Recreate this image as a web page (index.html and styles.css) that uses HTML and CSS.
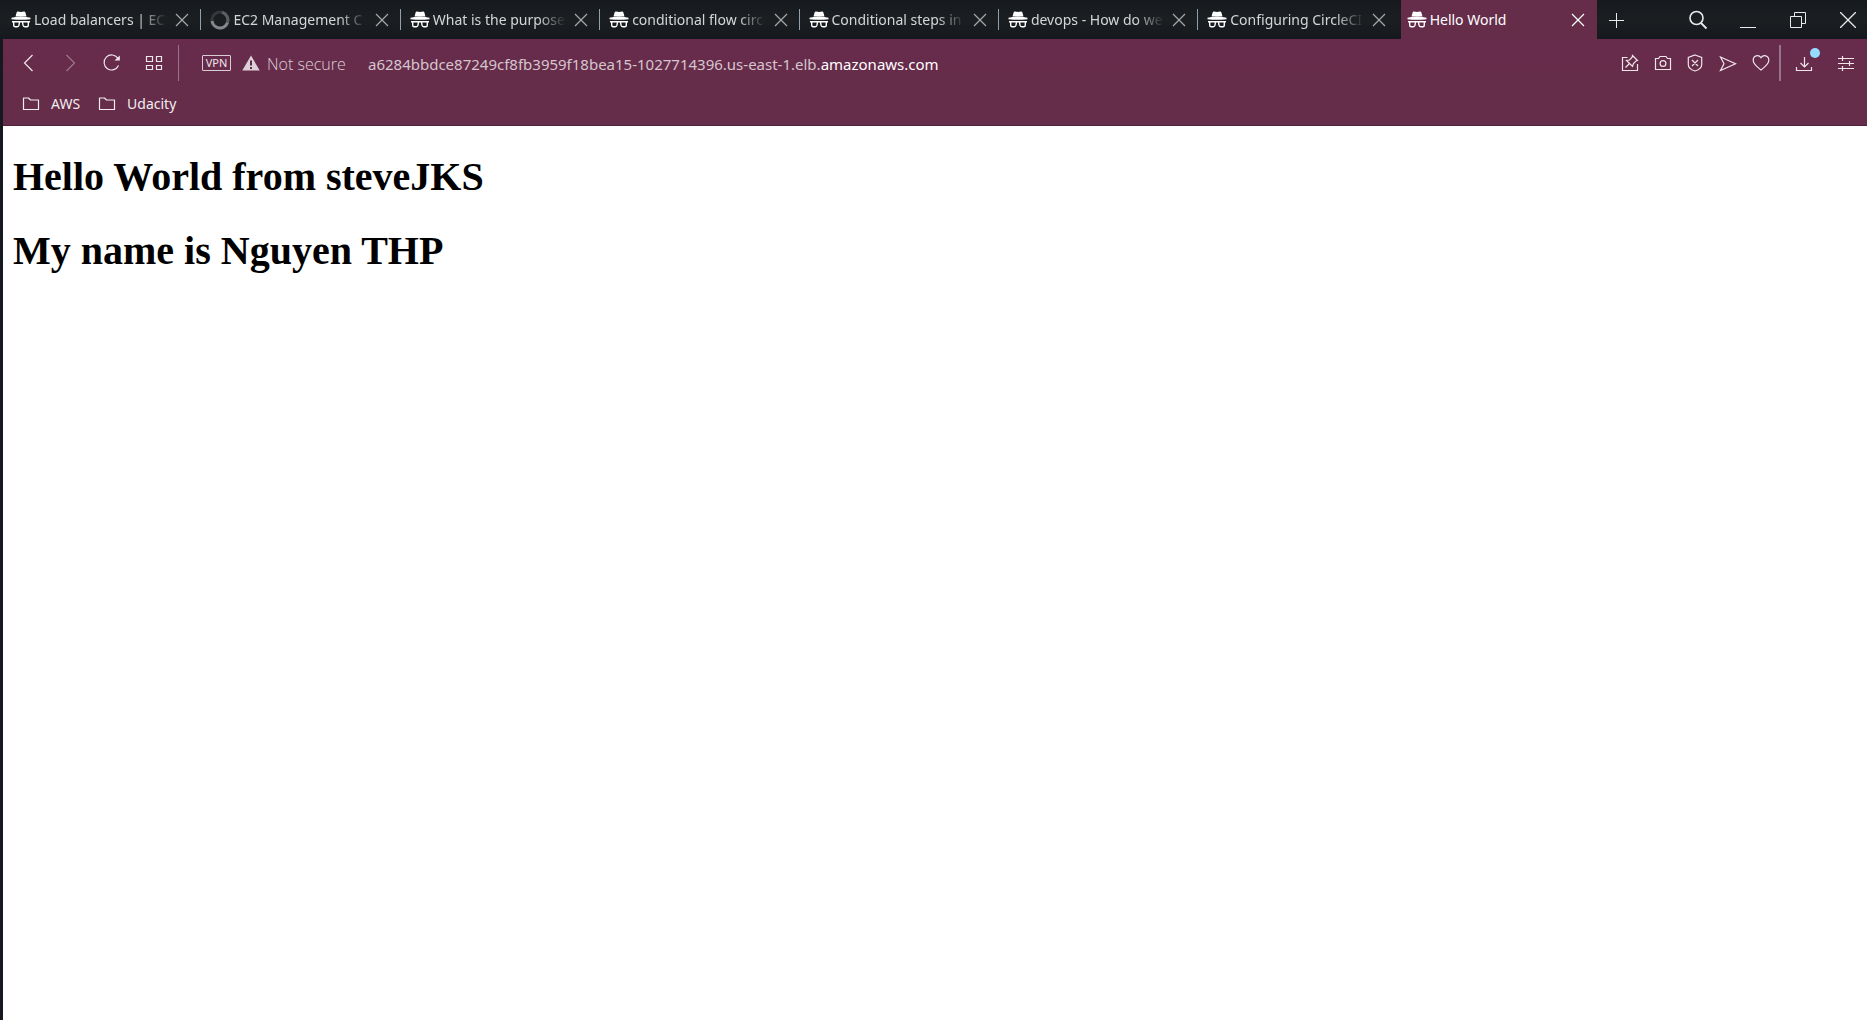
FILE: index.html
```
<!DOCTYPE html>
<html lang="en">
<head>
<meta charset="utf-8">
<title>Hello World</title>
<link rel="stylesheet" href="styles.css">
</head>
<body>
<svg class="sprite" aria-hidden="true">
  <symbol id="incognito" viewBox="0 0 20 17">
    <path fill="currentColor" d="M4.500 5.500L5.700 1.200Q6 0.300 7 0.400L10 1L13 0.400Q14 0.300 14.300 1.200L15.500 5.500ZM0.500 6.700Q4 5.800 10 5.800T19.500 6.700V8.200Q14 8.800 10 8.800T0.500 8.200Z"/>
    <path fill="none" stroke="currentColor" stroke-width="1.400" d="M1 10.800H19M2.700 11V14.200Q2.700 15.700 4.200 15.700H6.200Q7.700 15.700 8 14.200L8.500 11M17.300 11V14.200Q17.300 15.700 15.800 15.700H13.800Q12.300 15.700 12 14.200L11.500 11"/>
  </symbol>
  <symbol id="cross" viewBox="0 0 14 14"><path fill="none" stroke="currentColor" stroke-width="1.200" d="M1 1L13 13M13 1L1 13"/></symbol>
  <symbol id="folder" viewBox="0 0 18 14"><path fill="none" stroke="currentColor" stroke-width="1.200" stroke-linejoin="round" d="M1.500 1H6.500L8.500 3H16.500V12.500H1.500Z"/></symbol>
</svg>
<div class="window">
  <header class="titlebar">
    <nav class="tabs" aria-label="Tabs">
      <div class="tab"><svg class="favicon"><use href="#incognito"/></svg><a class="tab-title" href="#">Load balancers | EC2</a><button class="tab-close" aria-label="Close tab"><svg width="14" height="14"><use href="#cross"/></svg></button></div>
      <div class="tab"><svg class="favicon spinner" viewBox="0 0 20 20"><circle cx="10" cy="10" r="8" fill="none" stroke="#34383b" stroke-width="3"/><path d="M2 11A8 8 0 0 0 17.500 12.500" fill="none" stroke="#85888a" stroke-width="3"/><path d="M17.500 12.500A8 8 0 0 0 12 2.300" fill="none" stroke="#5b5f61" stroke-width="3"/></svg><a class="tab-title" href="#">EC2 Management C</a><button class="tab-close" aria-label="Close tab"><svg width="14" height="14"><use href="#cross"/></svg></button></div>
      <div class="tab"><svg class="favicon"><use href="#incognito"/></svg><a class="tab-title" href="#">What is the purpose</a><button class="tab-close" aria-label="Close tab"><svg width="14" height="14"><use href="#cross"/></svg></button></div>
      <div class="tab"><svg class="favicon"><use href="#incognito"/></svg><a class="tab-title" href="#">conditional flow circ</a><button class="tab-close" aria-label="Close tab"><svg width="14" height="14"><use href="#cross"/></svg></button></div>
      <div class="tab"><svg class="favicon"><use href="#incognito"/></svg><a class="tab-title" href="#">Conditional steps in</a><button class="tab-close" aria-label="Close tab"><svg width="14" height="14"><use href="#cross"/></svg></button></div>
      <div class="tab"><svg class="favicon"><use href="#incognito"/></svg><a class="tab-title" href="#">devops - How do we</a><button class="tab-close" aria-label="Close tab"><svg width="14" height="14"><use href="#cross"/></svg></button></div>
      <div class="tab"><svg class="favicon"><use href="#incognito"/></svg><a class="tab-title" href="#">Configuring CircleCI</a><button class="tab-close" aria-label="Close tab"><svg width="14" height="14"><use href="#cross"/></svg></button></div>
      <div class="tab active"><svg class="favicon"><use href="#incognito"/></svg><a class="tab-title" href="#" aria-current="page">Hello World</a><button class="tab-close" aria-label="Close tab"><svg width="14" height="14"><use href="#cross"/></svg></button></div>
    </nav>
    <button class="new-tab" aria-label="New tab"><svg width="16" height="16" viewBox="0 0 16 16"><path d="M8.500 1V16M1 8.500H16"/></svg></button>
    <div class="window-controls">
      <button aria-label="Search tabs"><svg width="20" height="20" viewBox="0 0 20 20"><circle cx="8.500" cy="8" r="6.500" stroke-width="1.600"/><path stroke-width="1.800" d="M13 13L18.500 18.500"/></svg></button>
      <button aria-label="Minimize"><svg width="16" height="16" viewBox="0 0 16 16"><path d="M0 15.500H16"/></svg></button>
      <button aria-label="Restore"><svg width="16" height="16" viewBox="0 0 16 16"><path d="M0.500 4.500H11.500V15.500H0.500ZM4.500 4.500V0.500H15.500V11.500H11.500"/></svg></button>
      <button aria-label="Close"><svg width="16" height="16" viewBox="0 0 16 16"><path stroke-width="1.300" d="M0 0L16 16M16 0L0 16"/></svg></button>
    </div>
  </header>
  <div class="chrome">
    <div class="toolbar">
      <div class="nav-buttons">
        <button aria-label="Back"><svg width="18" height="18" viewBox="0 0 18 18"><path d="M13.500 1L5.500 9L13.500 17"/></svg></button>
        <button aria-label="Forward" disabled><svg width="18" height="18" viewBox="0 0 18 18"><path d="M5.500 1L13.500 9L5.500 17"/></svg></button>
        <button aria-label="Reload"><svg width="18" height="18" viewBox="0 0 18 18"><path d="M15.500 11.500A7.500 7.500 0 1 1 14.800 4.200"/><path fill="currentColor" stroke="none" d="M16.800 1.500V6.500H11.500Z"/></svg></button>
        <button aria-label="Speed dial"><svg width="18" height="18" viewBox="0 0 18 18"><path d="M1.500 2.500H7.500V7.500H1.500ZM11.500 2.500H16.500V7.500H11.500ZM1.500 11.500H7.500V15.500H1.500ZM11.500 11.500H16.500V15.500H11.500Z"/></svg></button>
      </div>
      <span class="divider"></span>
      <div class="address">
        <button class="vpn">VPN</button>
        <svg class="warning" width="18" height="16" viewBox="0 0 18 16"><path fill="currentColor" d="M9 0.500L17.700 15.500H0.300Z"/><path stroke="#672b4a" stroke-width="2" d="M9 5.500V10.500M9 12V14"/></svg>
        <span class="security">Not secure</span>
        <div class="url" role="textbox" contenteditable="true" spellcheck="false" aria-label="Address">a6284bbdce87249cf8fb3959f18bea15-1027714396.us-east-1.elb.<span class="domain">amazonaws.com</span></div>
      </div>
      <div class="page-actions">
        <button aria-label="Pin page"><svg width="18" height="18" viewBox="0 0 18 18"><path d="M6.500 3.500H1.500V16.500H16.500V10M4.500 13.500L8.500 9.500M5.500 6.500L11.500 12.500L12.500 9.500L15 7L16.500 6.500L11.500 1.500L11 3.500L8.500 6L5.500 6.500Z"/></svg></button>
        <button aria-label="Snapshot"><svg width="18" height="18" viewBox="0 0 18 18"><path d="M1.500 4.500H4.500L6 2.500H12L13.500 4.500H16.500V15.500H1.500Z"/><circle cx="9" cy="9.500" r="2.900"/></svg></button>
        <button aria-label="Ad blocker"><svg width="18" height="18" viewBox="0 0 18 18"><path d="M9 1L15.700 3.500V10.500C15.700 14 12.500 16 9 17C5.500 16 2.300 14 2.300 10.500V3.500ZM6 6L12 12M12 6L6 12"/></svg></button>
        <button aria-label="Send to My Flow"><svg width="18" height="18" viewBox="0 0 18 18"><path d="M1.500 3L16.500 9.700L1.500 16.500L5 9.700Z"/></svg></button>
        <button aria-label="Add to bookmarks"><svg width="18" height="18" viewBox="0 0 18 18"><path d="M9 3.700C6.500 0.200 1.200 1.300 1.200 6.300C1.200 10.500 5.500 13 9 16C12.500 13 16.800 10.500 16.800 6.300C16.800 1.300 11.500 0.200 9 3.700Z"/></svg></button>
      </div>
      <span class="divider bold"></span>
      <div class="tools">
        <button class="download" aria-label="Downloads"><svg width="18" height="18" viewBox="0 0 18 18"><path d="M9.500 3V13M5.500 9L9.500 13L13.500 9M1.500 13V16.500H16.500V13"/></svg><span class="badge"></span></button>
        <button aria-label="Easy setup"><svg width="18" height="18" viewBox="0 0 18 18"><path d="M1 4.500H17M1 9.500H17M1 14.500H17M5.500 2V7M12.500 7V12M5.500 12V17"/></svg></button>
      </div>
    </div>
    <nav class="bookmarks" aria-label="Bookmarks">
      <a href="#"><svg width="18" height="14"><use href="#folder"/></svg>AWS</a>
      <a href="#"><svg width="18" height="14"><use href="#folder"/></svg>Udacity</a>
    </nav>
  </div>
  <main class="page">
    <h1>Hello World from steveJKS</h1>
    <h1>My name is Nguyen THP</h1>
  </main>
</div>
</body>
</html>
```
FILE: styles.css
```
* {
  box-sizing: border-box;
}

body {
  margin: 0;
  background: #fff;
  font: 14px/20px "Noto Sans", "Open Sans", sans-serif;
}

button {
  display: flex;
  align-items: center;
  justify-content: center;
  padding: 0;
  border: 0;
  background: none;
  color: inherit;
  font: inherit;
}

a {
  color: inherit;
  text-decoration: none;
}

svg {
  display: block;
  flex: none;
}

button svg {
  fill: none;
  stroke: currentColor;
  stroke-width: 1;
}

.sprite {
  position: absolute;
  width: 0;
  height: 0;
}

.window {
  display: flex;
  flex-direction: column;
  min-height: 100vh;
  background: #15191f;
}

.titlebar {
  display: flex;
  height: 39px;
  padding: 0 0 0 2px;
  background: linear-gradient(#161a1e, #1b1f22 50%, #15191d);
  color: #d4d6d7;
}

.tabs {
  display: flex;
  flex: 1;
  min-width: 0;
}

.tab {
  position: relative;
  display: flex;
  flex: 1 1 0;
  align-items: center;
  min-width: 0;
  padding: 0 12px 0 9px;
}

.tab::after {
  content: "";
  position: absolute;
  top: 9px;
  right: 0;
  width: 1px;
  height: 21px;
  background: #8fa0ae;
}

.tab:nth-last-child(-n+2)::after {
  display: none;
}

.favicon {
  width: 20px;
  height: 17px;
  color: #fff;
}

.spinner {
  height: 20px;
}

.tab-title {
  flex: 1;
  min-width: 0;
  margin: 0 4px 0 3px;
  overflow: hidden;
  white-space: nowrap;
  mask-image: linear-gradient(to left, transparent 4px, #000 32px);
}

.tab-close {
  width: 14px;
  height: 20px;
  color: #a5a9ab;
}

.active {
  margin-left: 3px;
  padding-left: 6px;
  background: #652d49;
  color: #fff;
}

.active .tab-title {
  mask-image: none;
}

.active .tab-close {
  color: #fff;
}

.new-tab {
  width: 37px;
  color: #e8eaeb;
}

.window-controls {
  display: flex;
  gap: 12px;
  margin-left: 45px;
  color: #e8eaeb;
}

.window-controls button {
  width: 38px;
}

.chrome {
  margin-left: 3px;
  border-bottom: 1px solid #4d2238;
  background: linear-gradient(#682b4c, #652d49 60%);
  color: #efe6eb;
}

.toolbar {
  display: flex;
  align-items: center;
  height: 48px;
  padding-left: 4px;
}

.toolbar button svg {
  stroke-width: 1.2;
}

.nav-buttons,
.tools {
  display: flex;
}

.nav-buttons button,
.tools button {
  position: relative;
  width: 42px;
  height: 36px;
}

.nav-buttons button:disabled {
  opacity: 0.4;
}

.divider {
  width: 1px;
  height: 36px;
  margin: 0 3px;
  background: #96748a;
}

.divider.bold {
  width: 2px;
  margin: 0 2px;
}

.address {
  display: flex;
  flex: 1;
  align-items: center;
  min-width: 0;
  padding-left: 20px;
}

.vpn {
  width: 29px;
  height: 16px;
  border: 1px solid #d9cdd4;
  border-radius: 1px;
  font-size: 11px;
  line-height: 14px;
}

.warning {
  margin: 0 7px 0 11px;
  color: #dcd2d8;
}

.security {
  flex: none;
  width: 101px;
  padding-top: 2px;
  color: #dccfd6;
  font: 300 16px/20px "Open Sans", sans-serif;
  white-space: nowrap;
}

.url {
  overflow: hidden;
  padding-top: 1px;
  color: #d5c6ce;
  font-size: 15px;
  white-space: nowrap;
}

.domain {
  color: #fff;
}

.page-actions {
  display: flex;
  width: 163px;
}

.page-actions button {
  flex: 1;
  height: 36px;
}

.badge {
  position: absolute;
  top: 3px;
  right: 5px;
  width: 10px;
  height: 10px;
  border-radius: 50%;
  background: #96dcff;
}

.bookmarks {
  display: flex;
  gap: 18px;
  height: 38px;
  padding: 7px 19px 0;
  color: #f2ecef;
}

.bookmarks a {
  display: flex;
  align-items: center;
  gap: 11px;
  height: 20px;
}

.page {
  flex: 1;
  margin-left: 3px;
  padding: 0 10px;
  background: #fff;
  color: #000;
  font-family: "Liberation Serif", "Times New Roman", serif;
}

.page h1 {
  margin: 28px 0;
  font-size: 40px;
  line-height: 46px;
}
```
